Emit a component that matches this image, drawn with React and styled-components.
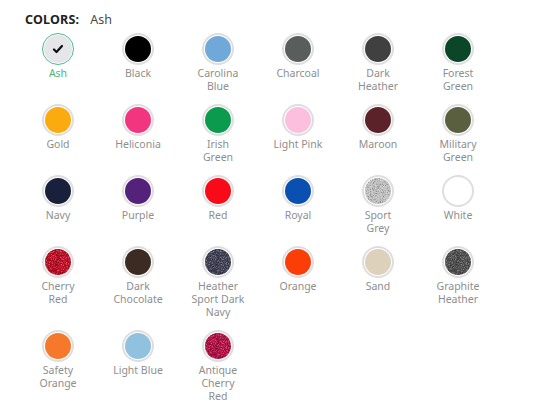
import React from 'react'
import styled, { createGlobalStyle } from 'styled-components';

const GlobalStyle = createGlobalStyle`
    body {
        margin: 0;
        background: #fff;
        font-family: "Noto Sans", "Open Sans", sans-serif;
    }
`;

// each label is split into the lines it shows in the shop
const colors = [
    { name: ['Ash'], color: '#e5e6ea', selected: true },
    { name: ['Black'], color: '#000000' },
    { name: ['Carolina', 'Blue'], color: '#70a8da' },
    { name: ['Charcoal'], color: '#595e5d' },
    { name: ['Dark', 'Heather'], color: '#404040' },
    { name: ['Forest', 'Green'], color: '#0b4628' },
    { name: ['Gold'], color: '#fbab10' },
    { name: ['Heliconia'], color: '#f1357f' },
    { name: ['Irish', 'Green'], color: '#0a9b4e' },
    { name: ['Light Pink'], color: '#fcc0de' },
    { name: ['Maroon'], color: '#5b2329' },
    { name: ['Military', 'Green'], color: '#5a5f40' },
    { name: ['Navy'], color: '#19203c' },
    { name: ['Purple'], color: '#55227b' },
    { name: ['Red'], color: '#f80a18' },
    { name: ['Royal'], color: '#0a50b0' },
    { name: ['Sport', 'Grey'], color: '#c4c4c4', heather: true },
    { name: ['White'], color: '#ffffff' },
    { name: ['Cherry', 'Red'], color: '#c0061f', heather: true },
    { name: ['Dark', 'Chocolate'], color: '#3b2b23' },
    { name: ['Heather', 'Sport Dark', 'Navy'], color: '#3c3b50', heather: true },
    { name: ['Orange'], color: '#fb3d08' },
    { name: ['Sand'], color: '#ddd1bc' },
    { name: ['Graphite', 'Heather'], color: '#4b4b4b', heather: true },
    { name: ['Safety', 'Orange'], color: '#f6792b' },
    { name: ['Light Blue'], color: '#90c1df' },
    { name: ['Antique', 'Cherry', 'Red'], color: '#b3093f', heather: true },
];

const CheckIcon = () => (
    <svg width="12" height="12" viewBox="0 0 24 24" fill="none" stroke="#111" strokeWidth="4.5" strokeLinecap="round" strokeLinejoin="round">
        <path d="M4 13l5 5L20 6" />
    </svg>
);

// speckled fabric look for heathered colours
const Speckle = () => (
    <svg width="26" height="26" viewBox="0 0 26 26">
        <filter id="speckle" x="0" y="0" width="100%" height="100%">
            <feTurbulence type="fractalNoise" baseFrequency="1.6" numOctaves="2" seed="4" />
            <feColorMatrix type="matrix" values="0 0 0 0 1  0 0 0 0 1  0 0 0 0 1  2.4 0 0 0 -1.1" />
        </filter>
        <filter id="speckleDark" x="0" y="0" width="100%" height="100%">
            <feTurbulence type="fractalNoise" baseFrequency="1.4" numOctaves="2" seed="9" />
            <feColorMatrix type="matrix" values="0 0 0 0 0  0 0 0 0 0  0 0 0 0 0  2.4 0 0 0 -1.1" />
        </filter>
        <rect width="26" height="26" filter="url(#speckleDark)" opacity="0.45" />
        <rect width="26" height="26" filter="url(#speckle)" opacity="0.45" />
    </svg>
);

const App = () => {
    return <Page>
        <GlobalStyle />
        <Header>
            <HeaderLabel>COLORS:</HeaderLabel>
            <HeaderValue>Ash</HeaderValue>
        </Header>
        <SwatchGrid>
            {colors.map(c => (
                <Item key={c.name.join(' ')}>
                    <Swatch selected={c.selected}>
                        <Fill color={c.color}>
                            {c.heather && <Speckle />}
                            {c.selected && <CheckIcon />}
                        </Fill>
                    </Swatch>
                    <Label selected={c.selected}>
                        {c.name.map(line => <Line key={line}>{line}</Line>)}
                    </Label>
                </Item>
            ))}
        </SwatchGrid>
    </Page>
}

const Page = styled.div`
    padding-top: 12px;
`;

const Header = styled.div`
    display: flex;
    align-items: baseline;
    gap: 11px;
    padding-left: 25px;
    line-height: 16px;
`;

const HeaderLabel = styled.span`
    font-size: 12.5px;
    font-weight: 700;
    color: #222;
    letter-spacing: 0.2px;
`;

const HeaderValue = styled.span`
    font-size: 12.5px;
    color: #4a4a4a;
`;

const SwatchGrid = styled.div`
    display: grid;
    grid-template-columns: repeat(6, 80px);
    row-gap: 11px;
    padding-left: 18px;
    margin-top: 5px;
`;

const Item = styled.div`
    display: flex;
    flex-direction: column;
    align-items: center;
`;

const Swatch = styled.div`
    box-sizing: border-box;
    width: 32px;
    height: 32px;
    border-radius: 50%;
    border: ${props => (props.selected ? '1.5px solid #4fbb85' : '2px solid #dedede')};
    padding: 1px;
    background: #fff;
    display: flex;
`;

const Fill = styled.div`
    flex: 1;
    border-radius: 50%;
    overflow: hidden;
    background-color: ${props => props.color};
    display: flex;
    align-items: center;
    justify-content: center;

    svg {
        display: block;
    }
`;

const Label = styled.div`
    margin-top: 2px;
    display: flex;
    flex-direction: column;
    align-items: center;
    font-size: 10.5px;
    line-height: 13px;
    color: ${props => (props.selected ? '#4fb47f' : '#8e8e8e')};
    text-align: center;
`;

const Line = styled.span`
    white-space: nowrap;
`;

export default App;
